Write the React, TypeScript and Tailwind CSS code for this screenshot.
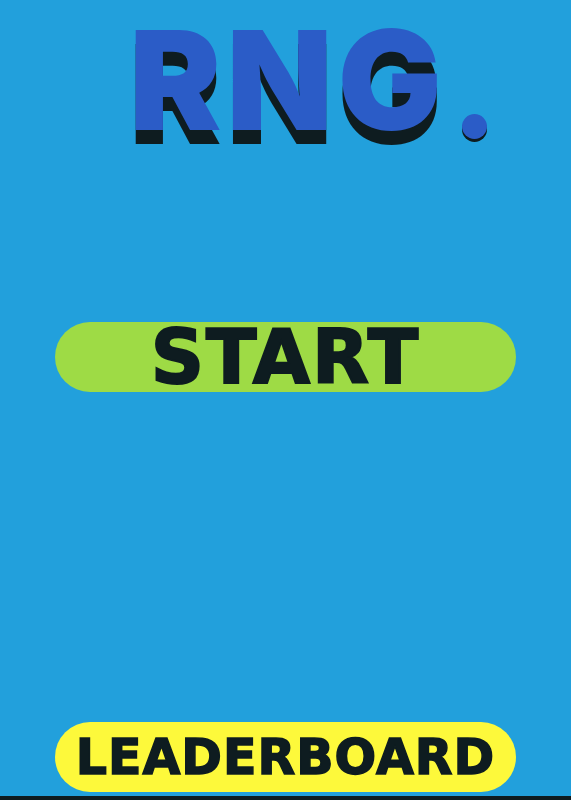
export default function App() {
  return (
    <div className="flex min-h-screen flex-col bg-[#22a0dc]">
      <div className="flex flex-1 flex-col items-center px-[55px] pb-1">
        <h1 className="relative mt-[1px] pl-[5px] font-['Inter',sans-serif] text-[138px] leading-[1.15] font-black tracking-[5px] text-[#2b5cc7] [text-shadow:0_14px_0_#0e1c20]">
          RNG
          <span className="absolute bottom-[21px] left-full ml-[15px] h-[25px] w-[25px] rounded-full bg-[#2b5cc7] shadow-[0_3px_0_#0e1c20]" />
        </h1>

        <button className="mt-[162px] flex h-[70px] w-full items-center justify-center rounded-full bg-[#9edb45] font-['DejaVu_Sans',sans-serif] text-[74px] leading-none font-bold tracking-[2px] text-[#0e1c20] [-webkit-text-stroke:2px_#0e1c20]">
          START
        </button>

        <button className="mt-auto flex h-[70px] w-full items-center justify-center rounded-full bg-[#fdf93b] font-['DejaVu_Sans',sans-serif] text-[49px] leading-none font-bold tracking-[1px] text-[#0e1c20] [-webkit-text-stroke:1.5px_#0e1c20]">
          LEADERBOARD
        </button>
      </div>
      <div className="h-1 bg-[#0e1c20]" />
    </div>
  );
}
